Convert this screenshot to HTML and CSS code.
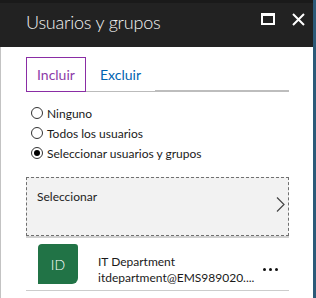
FILE: index.html
```html
<!DOCTYPE html>
<html lang="es">
<head>
<meta charset="utf-8">
<title>Usuarios y grupos</title>
<link rel="stylesheet" href="styles.css">
</head>
<body>
<div class="frame">
  <div class="main">
    <div class="topline"></div>
    <header class="header">
      <h1 class="title">Usuarios y grupos</h1>
      <div class="actions">
        <span class="icon-max"></span>
        <svg class="icon-close" width="13" height="13" viewBox="0 0 13 13"><path d="M1 1 L12 12 M12 1 L1 12" stroke="#fff" stroke-width="2"/></svg>
      </div>
    </header>
    <div class="content">
      <div class="tabs">
        <div class="tab active">Incluir</div>
        <div class="tab">Excluir</div>
        <div class="tab-fill"></div>
      </div>
      <div class="radios">
        <label class="radio"><span class="circle"></span>Ninguno</label>
        <label class="radio"><span class="circle"></span>Todos los usuarios</label>
        <label class="radio"><span class="circle checked"></span>Seleccionar usuarios y grupos</label>
      </div>
      <div class="selector">
        <span class="selector-label">Seleccionar</span>
        <svg class="chevron" width="9" height="15" viewBox="0 0 9 15"><path d="M1 0.5 L8 7.5 L1 14.5" fill="none" stroke="#444" stroke-width="1.2"/></svg>
      </div>
      <div class="item">
        <div class="avatar">ID</div>
        <div class="item-text">
          <div class="item-name">IT Department</div>
          <div class="item-mail">itdepartment@EMS989020....</div>
        </div>
        <div class="dots"><span></span><span></span><span></span></div>
      </div>
    </div>
  </div>
  <div class="edge"></div>
</div>
</body>
</html>
```
FILE: styles.css
```css
html, body {
  margin: 0;
  padding: 0;
  background: #fff;
}
body {
  width: 316px;
  height: 298px;
  overflow: hidden;
  font-family: "Lato", "Open Sans", sans-serif;
}
.frame {
  display: flex;
  height: 298px;
}
.main {
  width: 313px;
  display: flex;
  flex-direction: column;
}
.edge {
  width: 3px;
  background: #2c5a78;
}
.topline {
  height: 3px;
  background: #1a1a1a;
}
.header {
  height: 44px;
  background: #222222;
  display: flex;
  align-items: center;
  padding: 0 8px 0 26px;
}
.title {
  margin: 0;
  flex: 1;
  font-family: "Lato", sans-serif;
  font-weight: 300;
  font-size: 18px;
  letter-spacing: -0.2px;
  color: #f2f2f2;
  position: relative;
  top: -3px;
}
.actions {
  display: flex;
  align-items: center;
  gap: 17px;
  position: relative;
  top: -6px;
}
.icon-max {
  width: 14px;
  height: 12px;
  box-sizing: border-box;
  border: 2px solid #fff;
  border-top-width: 3px;
}
.content {
  flex: 1;
  border-left: 1px solid #c3c3c3;
  padding: 10px 24px 0 25px;
}
.tabs {
  display: flex;
  height: 35px;
}
.tab {
  font-size: 14px;
  color: #0063b1;
  line-height: 35px;
  padding: 0 14px;
  border-bottom: 1px solid #bbb;
}
.tab.active {
  color: #8c3ca8;
  border: 1px solid #8a2da5;
  line-height: 33px;
  padding: 0 10px;
  width: 38px;
}
.tab-fill {
  flex: 1;
  border-bottom: 2px solid #bdbdbd;
}
.radios {
  margin-top: 11px;
  display: flex;
  flex-direction: column;
}
.radio {
  height: 20px;
  display: flex;
  align-items: center;
  font-size: 12px;
  color: #1a1a1a;
  padding-left: 5px;
}
.circle {
  width: 12px;
  height: 12px;
  box-sizing: border-box;
  border: 1px solid #333;
  border-radius: 50%;
  margin-right: 4px;
  background: #fff;
  display: flex;
  align-items: center;
  justify-content: center;
}
.circle.checked::after {
  content: "";
  width: 6px;
  height: 6px;
  border-radius: 50%;
  background: #000;
}
.selector {
  margin-top: 14px;
  height: 59px;
  box-sizing: border-box;
  border: 1px dashed #707070;
  background: #f2f2f2;
  display: flex;
  align-items: center;
  padding: 0 3px 0 10px;
  box-shadow: 0 2px 0 #cfcfcf;
}
.selector-label {
  flex: 1;
  font-size: 12px;
  color: #222;
  position: relative;
  top: -10px;
}
.chevron {
  position: relative;
  top: -2px;
}
.item {
  margin-top: 8px;
  height: 46px;
  display: flex;
  align-items: flex-start;
  border-bottom: 1px solid #cccccc;
  padding-left: 12px;
}
.avatar {
  width: 40px;
  height: 40px;
  background: #217346;
  color: #fff;
  border-radius: 4px 3px 6px 0;
  display: flex;
  align-items: center;
  justify-content: center;
  font-size: 14px;
  font-weight: 300;
}
.item-text {
  flex: 1;
  margin-left: 20px;
  padding-top: 10px;
  font-size: 12px;
  color: #1a1a1a;
  line-height: 16px;
}
.dots {
  display: flex;
  gap: 3px;
  margin-top: 24px;
  margin-right: 11px;
}
.dots span {
  width: 3px;
  height: 3px;
  border-radius: 50%;
  background: #111;
}
```
